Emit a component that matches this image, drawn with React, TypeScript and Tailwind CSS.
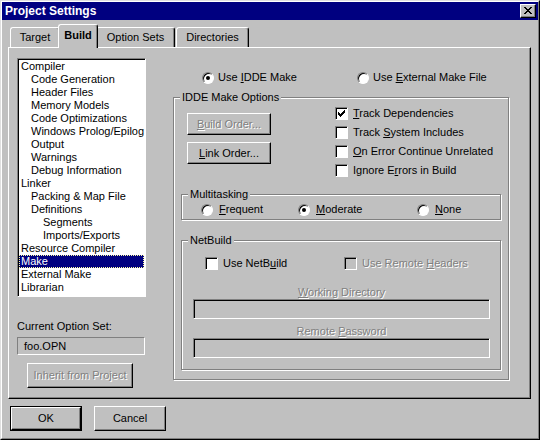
import React from "react";

type Node = [string, number];

const tree: Node[] = [
  ["Compiler", 0],
  ["Code Generation", 1],
  ["Header Files", 1],
  ["Memory Models", 1],
  ["Code Optimizations", 1],
  ["Windows Prolog/Epilog", 1],
  ["Output", 1],
  ["Warnings", 1],
  ["Debug Information", 1],
  ["Linker", 0],
  ["Packing & Map File", 1],
  ["Definitions", 1],
  ["Segments", 2],
  ["Imports/Exports", 2],
  ["Resource Compiler", 0],
  ["Make", 0],
  ["External Make", 0],
  ["Librarian", 0],
];

const indent = ["pl-[2px]", "pl-[12px]", "pl-[24px]"];

const raised =
  "border border-white border-r-black border-b-black shadow-[inset_-1px_-1px_0_#808080]";
const sunken =
  "border border-[#808080] border-r-white border-b-white shadow-[inset_1px_1px_0_#000]";
const greyed = "text-[#808080] [text-shadow:1px_1px_0_#fff]";

function CloseGlyph() {
  return (
    <svg width="8" height="7" viewBox="0 0 8 7" shapeRendering="crispEdges">
      <path
        d="M0 0h2v1H0z M6 0h2v1H6z M1 1h2v1H1z M5 1h2v1H5z M2 2h4v1H2z M3 3h2v1H3z M2 4h4v1H2z M1 5h2v1H1z M5 5h2v1H5z M0 6h2v1H0z M6 6h2v1H6z"
        fill="#000"
      />
    </svg>
  );
}

function CheckGlyph() {
  return (
    <svg width="7" height="7" viewBox="0 0 7 7" shapeRendering="crispEdges">
      <path
        d="M6 0h1v1H6z M5 1h2v1H5z M0 2h1v1H0z M4 2h3v1H4z M0 3h2v1H0z M3 3h3v1H3z M0 4h5v1H0z M1 5h3v1H1z M2 6h1v1H2z"
        fill="#000"
      />
    </svg>
  );
}

function Radio({
  checked,
  wide,
  children,
}: {
  checked?: boolean;
  wide?: boolean;
  children: React.ReactNode;
}) {
  return (
    <div className={`flex items-center ${wide ? "gap-[6px]" : "gap-[4px]"}`}>
      <span
        className={`flex h-[12px] w-[12px] items-center justify-center rounded-full bg-white ${sunken}`}
      >
        {checked && <span className="h-[4px] w-[4px] rounded-full bg-black" />}
      </span>
      <span className="whitespace-nowrap">{children}</span>
    </div>
  );
}

function Check({
  checked,
  disabled,
  children,
}: {
  checked?: boolean;
  disabled?: boolean;
  children: React.ReactNode;
}) {
  return (
    <div className="flex items-center gap-[5px]">
      <span
        className={`flex h-[13px] w-[13px] items-center justify-center ${sunken} ${
          disabled ? "bg-[#c0c0c0]" : "bg-white"
        }`}
      >
        {checked && <CheckGlyph />}
      </span>
      <span className={`whitespace-nowrap ${disabled ? greyed : ""}`}>{children}</span>
    </div>
  );
}

function Btn({
  disabled,
  className,
  children,
}: {
  disabled?: boolean;
  className?: string;
  children: React.ReactNode;
}) {
  return (
    <button
      type="button"
      className={`flex items-center justify-center bg-[#c0c0c0] ${raised} ${
        disabled ? greyed : ""
      } ${className ?? ""}`}
    >
      {children}
    </button>
  );
}

function Group({
  title,
  className,
  children,
}: {
  title: string;
  className?: string;
  children: React.ReactNode;
}) {
  return (
    <div
      className={`relative border border-[#808080] shadow-[inset_1px_1px_0_#fff,1px_1px_0_#fff] ${
        className ?? ""
      }`}
    >
      <span className="absolute left-[6px] top-[-7px] bg-[#c0c0c0] px-[2px] leading-[13px] whitespace-nowrap">
        {title}
      </span>
      {children}
    </div>
  );
}

function Tab({ label, active, className }: { label: string; active?: boolean; className?: string }) {
  return (
    <div
      className={`flex items-center justify-center rounded-t-[3px] border border-b-0 border-white border-r-black bg-[#c0c0c0] shadow-[inset_-1px_0_0_#808080] ${
        active ? "relative z-10 -mb-px h-[24px] pb-[3px] font-bold" : "h-[20px]"
      } ${className ?? ""}`}
    >
      {label}
    </div>
  );
}

export default function App() {
  return (
    <div className="h-[440px] w-[540px] border border-[#dfdfdf] border-r-black border-b-black bg-[#c0c0c0] text-[11px] leading-[13px] text-black [font-family:'Liberation_Sans',Arial,sans-serif]">
      <div className="flex h-full flex-col border border-white border-r-[#808080] border-b-[#808080]">
        {/* caption */}
        <div className="flex h-[18px] items-center bg-[#000080] pl-[3px] pr-[2px]">
          <span className="text-[12px] font-bold leading-none text-white">Project Settings</span>
          <button
            type="button"
            className={`ml-auto flex h-[14px] w-[16px] items-center justify-center bg-[#c0c0c0] pb-px ${raised}`}
          >
            <CloseGlyph />
          </button>
        </div>

        {/* tabs */}
        <div className="flex h-[27px] items-end pl-[8px]">
          <Tab label="Target" className="w-[50px]" />
          <Tab label="Build" active className="-ml-[2px] -mr-[2px] w-[40px]" />
          <Tab label="Option Sets" className="w-[79px]" />
          <Tab label="Directories" className="ml-px w-[73px]" />
        </div>

        <div
          className={`ml-[6px] flex h-[352px] w-[523px] pl-[8px] pt-[10px] border border-white border-r-black border-b-black shadow-[inset_-1px_-1px_0_#808080]`}
        >
          {/* left column */}
          <div className="flex w-[129px] flex-col">
            <div className={`h-[239px] w-[129px] bg-white p-px ${sunken}`}>
              {tree.map(([name, level]) => (
                <div
                  key={name}
                  className={`h-[13px] whitespace-nowrap leading-[13px] ${indent[level]} ${
                    name === "Make"
                      ? "bg-[#000080] text-white outline-1 outline-dotted outline-[#ffffa0] -outline-offset-1"
                      : ""
                  }`}
                >
                  {name}
                </div>
              ))}
            </div>
            <div className="mt-[23px]">Current Option Set:</div>
            <div className="mt-[4px] flex h-[18px] w-[128px] items-center border border-[#808080] border-r-white border-b-white pl-[6px]">
              foo.OPN
            </div>
            <Btn disabled className="ml-[10px] mt-[8px] h-[25px] w-[106px]">
              Inherit from Project
            </Btn>
          </div>

          {/* right column */}
          <div className="ml-[27px] flex w-[336px] flex-col">
            <div className="mt-[13px] flex h-[13px] items-center">
              <div className="ml-[29px] w-[155px]">
                <Radio checked>
                  Use <u>I</u>DDE Make
                </Radio>
              </div>
              <Radio>
                Use <u>E</u>xternal Make File
              </Radio>
            </div>

            <Group title="IDDE Make Options" className="mt-[13px] h-[283px]">
              <div className="mt-[6px] flex">
                <div className="ml-[13px] flex w-[148px] flex-col gap-[7px] pt-[9px]">
                  <Btn disabled className="h-[22px] w-[84px]">
                    <span>
                      <u>B</u>uild Order...
                    </span>
                  </Btn>
                  <Btn className="h-[22px] w-[84px]">
                    <span>
                      <u>L</u>ink Order...
                    </span>
                  </Btn>
                </div>
                <div className="flex flex-col">
                  <div className="flex h-[19px] items-center">
                    <Check checked>
                      <u>T</u>rack Dependencies
                    </Check>
                  </div>
                  <div className="flex h-[19px] items-center">
                    <Check>
                      Track <u>S</u>ystem Includes
                    </Check>
                  </div>
                  <div className="flex h-[19px] items-center">
                    <Check>
                      <u>O</u>n Error Continue Unrelated
                    </Check>
                  </div>
                  <div className="flex h-[19px] items-center">
                    <Check>
                      Ignore E<u>r</u>rors in Build
                    </Check>
                  </div>
                </div>
              </div>

              <Group title="Multitasking" className="mx-[7px] mt-[14px] h-[26px]">
                <div className="mt-[8px] flex h-[13px] items-center">
                  <div className="ml-[19px] w-[97px]">
                    <Radio wide>
                      <u>F</u>requent
                    </Radio>
                  </div>
                  <div className="w-[119px]">
                    <Radio wide checked>
                      <u>M</u>oderate
                    </Radio>
                  </div>
                  <Radio wide>
                    <u>N</u>one
                  </Radio>
                </div>
              </Group>

              <Group title="NetBuild" className="mx-[7px] mt-[20px] h-[130px]">
                <div className="mt-[16px] flex h-[13px] items-center">
                  <div className="ml-[23px] w-[139px]">
                    <Check>
                      Use NetB<u>u</u>ild
                    </Check>
                  </div>
                  <Check disabled>
                    Use Remote <u>H</u>eaders
                  </Check>
                </div>
                <div className={`ml-[11px] mt-[16px] w-[297px] text-center ${greyed}`}>
                  <u>W</u>orking Directory
                </div>
                <div className={`ml-[11px] h-[20px] w-[297px] ${sunken}`} />
                <div className={`ml-[11px] mt-[6px] w-[297px] text-center ${greyed}`}>
                  Remote <u>P</u>assword
                </div>
                <div className={`ml-[11px] h-[20px] w-[297px] ${sunken}`} />
              </Group>
            </Group>
          </div>
        </div>

        {/* dialog buttons */}
        <div className="ml-[8px] mt-[7px] flex gap-[12px]">
          <div className="h-[25px] w-[72px] border border-black">
            <Btn className="h-full w-full">OK</Btn>
          </div>
          <Btn className="h-[25px] w-[72px]">Cancel</Btn>
        </div>
      </div>
    </div>
  );
}
